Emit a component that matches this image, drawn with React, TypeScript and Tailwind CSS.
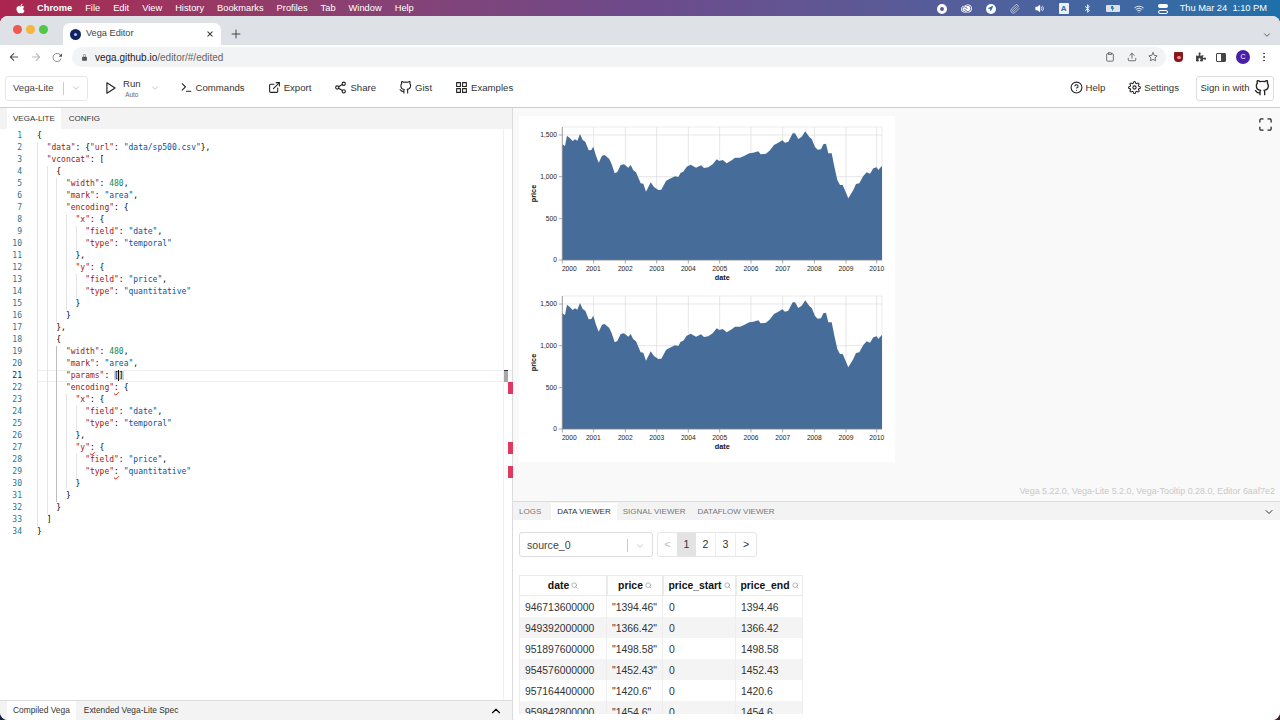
import { FaApple, FaBluetoothB, FaBolt, FaLocationArrow, FaPuzzlePiece } from "react-icons/fa";
import {
  FiChevronDown,
  FiChevronUp,
  FiExternalLink,
  FiGithub,
  FiGrid,
  FiHelpCircle,
  FiMaximize,
  FiMoreVertical,
  FiPaperclip,
  FiPlay,
  FiSearch,
  FiSettings,
  FiShare2,
  FiStar,
  FiTerminal,
  FiUpload,
  FiClipboard,
  FiWifi,
} from "react-icons/fi";
import { IoArrowBack, IoArrowForward, IoReload, IoLockClosed, IoClose, IoAdd, IoVolumeMedium } from "react-icons/io5";
import { SiAdobecreativecloud } from "react-icons/si";

const code = [
  "{",
  '  "data": {"url": "data/sp500.csv"},',
  '  "vconcat": [',
  "    {",
  '      "width": 480,',
  '      "mark": "area",',
  '      "encoding": {',
  '        "x": {',
  '          "field": "date",',
  '          "type": "temporal"',
  "        },",
  '        "y": {',
  '          "field": "price",',
  '          "type": "quantitative"',
  "        }",
  "      }",
  "    },",
  "    {",
  '      "width": 480,',
  '      "mark": "area",',
  '      "params": []',
  '      "encoding": {',
  '        "x": {',
  '          "field": "date",',
  '          "type": "temporal"',
  "        },",
  '        "y": {',
  '          "field": "price",',
  '          "type": "quantitative"',
  "        }",
  "      }",
  "    }",
  "  ]",
  "}",
];

const squiggled = [22, 27, 29];

const CodeText = ({ text, num }: { text: string; num: number }) => {
  const parts = text.split(/("[^"]*"(?=:)|"[^"]*"|\b\d+\b)/);
  return (
    <>
      {parts.map((p, i) => {
        if (p === "") return null;
        const isKey = p.startsWith('"') && parts[i + 1]?.startsWith(":");
        if (isKey) return <span key={i} className="text-[#a31515]">{p}</span>;
        if (p.startsWith('"')) return <span key={i} className="text-[#0451a5]">{p}</span>;
        if (/^\d+$/.test(p)) return <span key={i} className="text-[#098658]">{p}</span>;
        if (num === 21 && p.includes("[]")) {
          return (
            <span key={i}>
              {p.replace("[]", "")}
              <span className="relative bg-[#d4d4d4]">
                []
                <span className="absolute left-[4px] top-[-1px] h-[11px] w-[1px] bg-black"></span>
              </span>
            </span>
          );
        }
        if (squiggled.includes(num) && p.startsWith(":")) {
          return (
            <span key={i}>
              <span className="underline decoration-wavy decoration-[#e51400] decoration-[0.5px] underline-offset-[1px]">:</span>
              {p.slice(1)}
            </span>
          );
        }
        return <span key={i}>{p}</span>;
      })}
    </>
  );
};

const CodeLine = ({ text, num }: { text: string; num: number }) => {
  const spaces = text.length - text.trimStart().length;
  const levels = spaces / 2;
  const active = num === 21;
  return (
    <div className="flex h-[12px] items-center">
      <div className={`w-[22px] shrink-0 text-right ${active ? "text-[#0b216f]" : "text-[#237893]"}`}>{num}</div>
      <div className={`ml-[15px] flex h-[12px] flex-1 items-center whitespace-pre ${active ? "border-y border-[#eeeeee]" : ""}`}>
        {Array.from({ length: levels }).map((_, i) => (
          <span
            key={i}
            className={`inline-block h-[12px] w-[9.63px] shrink-0 border-l ${
              num >= 19 && num <= 31 && i === 2 ? "border-[#bdbdbd]" : "border-[#e4e4e4]"
            }`}
          ></span>
        ))}
        <span className="text-black">
          <CodeText text={text.trimStart()} num={num} />
        </span>
      </div>
    </div>
  );
};

// traced from the chart, in 3x px
const pts = [
  [127, 88], [135, 93], [141, 62], [150, 70], [158, 78], [165, 73], [172, 77], [180, 57], [188, 75], [196, 80],
  [206, 106], [214, 105], [220, 95], [228, 122], [236, 143], [246, 122], [254, 120], [268, 132], [275, 148], [284, 175],
  [292, 171], [302, 150], [312, 148], [325, 158], [332, 150], [340, 166], [348, 172], [362, 205], [370, 206], [378, 230],
  [392, 202], [402, 216], [415, 225], [424, 224], [438, 198], [448, 192], [465, 184], [475, 186], [482, 173], [490, 170],
  [500, 155], [512, 149], [528, 158], [543, 151], [552, 159], [565, 157], [578, 148], [590, 133], [598, 138], [608, 135],
  [620, 145], [635, 136], [645, 128], [660, 128], [672, 123], [688, 115], [700, 113], [715, 109], [722, 118], [738, 116],
  [750, 106], [762, 90], [775, 83], [787, 76], [795, 83], [805, 80], [818, 55], [825, 55], [835, 72], [845, 65],
  [856, 49], [868, 66], [875, 72], [885, 96], [893, 104], [903, 103], [910, 88], [918, 86], [925, 115], [935, 115],
  [942, 150], [952, 195], [960, 210], [968, 210], [985, 250], [1000, 225], [1008, 207], [1018, 205], [1030, 183], [1040, 172],
  [1050, 176], [1060, 160], [1070, 157], [1075, 165], [1086, 152],
];
const areaPath =
  "M42.33 145 " + pts.map(([x, y]) => `L${(x / 3).toFixed(1)} ${(y / 3).toFixed(1)}`).join(" ") + " L362 145 Z";

const ticksX = [
  [127, 148, "2000"], [221, 220, "2001"], [316, 316, "2002"], [410, 410, "2003"], [505, 505, "2004"], [599, 599, "2005"],
  [693, 693, "2006"], [788, 788, "2007"], [883, 883, "2008"], [978, 978, "2009"], [1070, 1070, "2010"],
] as const;
const ticksY = [
  [60, "1,500"], [185, "1,000"], [311, "500"], [435, "0"],
] as const;

const Chart = ({ height }: { height: number }) => (
  <svg viewBox={`-1 1 376 ${height}`} width={376} height={height} className="block" fontFamily="'Liberation Sans', sans-serif">
    <rect x="42.3" y="12" width="319.7" height="133" fill="#fff" stroke="#dddddd" strokeWidth="0.6" />
    {ticksX.map(([x]) => (
      <line key={x} x1={x / 3} x2={x / 3} y1="12" y2="145" stroke="#dddddd" strokeWidth="0.7" />
    ))}
    {ticksY.map(([y]) => (
      <line key={y} x1="42.3" x2="362" y1={y / 3} y2={y / 3} stroke="#dddddd" strokeWidth="0.7" />
    ))}
    <path d={areaPath} fill="#466d99" />
    {ticksX.map(([x, lx, label]) => (
      <g key={x}>
        <line x1={x / 3} x2={x / 3} y1="145" y2="148.5" stroke="#888" strokeWidth="0.7" />
        <text x={lx / 3} y="155.5" textAnchor="middle" fontSize="6.7" fill="#222">{label}</text>
      </g>
    ))}
    {ticksY.map(([y, label]) => (
      <g key={y}>
        <line x1="38.8" x2="42.3" y1={y / 3} y2={y / 3} stroke="#888" strokeWidth="0.7" />
        <text x="37" y={y / 3 + 2.4} textAnchor="end" fontSize="6.7" fill="#222">{label}</text>
      </g>
    ))}
    <line x1="42.3" x2="362" y1="145" y2="145" stroke="#888" strokeWidth="0.7" />
    <line x1="42.3" x2="42.3" y1="12" y2="145" stroke="#888" strokeWidth="0.7" />
    <text x="202.3" y="165" textAnchor="middle" fontSize="7.3" fontWeight="700" fill="#111">date</text>
    <text transform="translate(16 78.5) rotate(-90)" textAnchor="middle" fontSize="7.3" fontWeight="700" fill="#111">price</text>
  </svg>
);

const rows = [
  ["946713600000", '"1394.46"', "0", "1394.46"],
  ["949392000000", '"1366.42"', "0", "1366.42"],
  ["951897600000", '"1498.58"', "0", "1498.58"],
  ["954576000000", '"1452.43"', "0", "1452.43"],
  ["957164400000", '"1420.6"', "0", "1420.6"],
  ["959842800000", '"1454.6"', "0", "1454.6"],
];

const Th = ({ label, width }: { label: string; width: string }) => (
  <div className={`flex h-[21px] items-center justify-center gap-[2px] border border-[#eaeaea] font-bold text-[#111] ${width}`}>
    {label}
    <FiSearch className="h-[7px] w-[7px] text-[#888]" />
  </div>
);

const HeaderItem = ({ icon, label }: { icon: React.ReactNode; label: string }) => (
  <div className="flex items-center gap-[3px]">
    {icon}
    <span>{label}</span>
  </div>
);

export default function App() {
  const iconCls = "h-[13px] w-[13px] text-[#222]";
  return (
    <div className="relative h-[720px] w-[1280px] overflow-hidden bg-linear-to-r from-[#ab254f] via-[#6d4a8b] to-[#1c70aa] font-['Liberation_Sans',sans-serif]">
      {/* wallpaper showing at the window's lower corners */}
      <span className="absolute bottom-0 left-0 h-[8px] w-[8px] bg-[#14223f]"></span>
      <span className="absolute bottom-0 right-0 h-[8px] w-[8px] bg-[#4a1630]"></span>

      {/* mac menu bar */}
      <div className="flex h-[16px] items-center pl-[15px] pr-[13px] pt-px text-[9.3px] text-white">
        <FaApple className="mr-[11px] h-[11px] w-[11px]" />
        <span className="mr-[13px] font-bold">Chrome</span>
        <div className="flex gap-[13px]">
          <span>File</span>
          <span>Edit</span>
          <span>View</span>
          <span>History</span>
          <span>Bookmarks</span>
          <span>Profiles</span>
          <span>Tab</span>
          <span>Window</span>
          <span>Help</span>
        </div>
        <div className="ml-auto flex items-center gap-[14px]">
          <span className="h-[10px] w-[10px] rounded-full border-[3px] border-white"></span>
          <SiAdobecreativecloud className="h-[11px] w-[11px]" />
          <span className="flex h-[10px] w-[10px] items-center justify-center rounded-full bg-white">
            <FaLocationArrow className="h-[5px] w-[5px] text-[#2a6ea5]" />
          </span>
          <FiPaperclip className="h-[10px] w-[10px] text-white/70" />
          <IoVolumeMedium className="h-[11px] w-[11px]" />
          <span className="flex h-[11px] w-[10px] items-center justify-center rounded-[1px] bg-white/90 text-[8px] font-bold text-[#2a6ea5]">A</span>
          <FaBluetoothB className="h-[9px] w-[9px]" />
          <span className="flex h-[7px] w-[14px] items-center justify-center rounded-[1px] bg-white/80">
            <FaBolt className="h-[5px] w-[5px] text-[#2a6ea5]" />
          </span>
          <FiWifi className="h-[10px] w-[10px]" />
          <span className="flex h-[10px] w-[10px] flex-col justify-between">
            <span className="h-[4px] rounded-full bg-white"></span>
            <span className="h-[4px] rounded-full border border-white"></span>
          </span>
          <span className="-ml-[2px]">Thu Mar 24&nbsp;&nbsp;1:10 PM</span>
        </div>
      </div>

      {/* browser window */}
      <div className="relative flex h-[704px] flex-col overflow-hidden rounded-[8px] bg-white text-[#333]">
        <div className="flex h-[29px] items-end bg-[#dee1e6]">
          <div className="mb-[11px] ml-[13px] flex gap-[4px]">
            <span className="h-[9px] w-[9px] rounded-full bg-[#ee5a52]"></span>
            <span className="h-[9px] w-[9px] rounded-full bg-[#f4b73d]"></span>
            <span className="h-[9px] w-[9px] rounded-full bg-[#4fc748]"></span>
          </div>
          <div className="ml-[15px] flex h-[22px] w-[158px] items-center rounded-t-[7px] bg-white pl-[7px] pr-[6px] text-[9.2px] text-[#444]">
            <span className="mr-[5px] flex h-[11px] w-[11px] items-center justify-center rounded-full bg-[#14235e]">
              <span className="h-[3px] w-[3px] rounded-full bg-[#9fc2ff]"></span>
            </span>
            Vega Editor
            <IoClose className="ml-auto h-[10px] w-[10px] text-[#333]" />
          </div>
          <IoAdd className="mb-[4px] ml-[8px] h-[14px] w-[14px] text-[#333]" />
          <FiChevronDown className="mb-[5px] ml-auto mr-[8px] h-[10px] w-[10px] text-[#444]" />
        </div>

        <div className="flex h-[24px] items-center bg-white pl-[8px] pr-[10px]">
          <IoArrowBack className="h-[12px] w-[12px] text-[#555]" />
          <IoArrowForward className="ml-[10px] h-[12px] w-[12px] text-[#bbb]" />
          <IoReload className="ml-[10px] h-[11px] w-[11px] text-[#555]" />
          <div className="ml-[9px] flex h-[20px] w-[1095px] items-center rounded-full bg-[#f1f3f4] pl-[9px] pr-[8px] text-[10px]">
            <IoLockClosed className="mr-[7px] h-[7px] w-[7px] text-[#555]" />
            <span className="text-[#222]">vega.github.io</span>
            <span className="text-[#666]">/editor/#/edited</span>
            <FiClipboard className="ml-auto h-[10px] w-[10px] text-[#555]" />
            <FiUpload className="ml-[12px] h-[10px] w-[10px] text-[#555]" />
            <FiStar className="ml-[11px] h-[10px] w-[10px] text-[#555]" />
          </div>
          <span className="ml-[8px] flex h-[10px] w-[9px] items-center justify-center rounded-b-[4px] rounded-t-[1px] bg-[#8a1620]">
            <span className="h-[3px] w-[4px] rounded-sm bg-[#e88]"></span>
          </span>
          <FaPuzzlePiece className="ml-[13px] h-[10px] w-[10px] text-[#444]" />
          <span className="ml-[10px] h-[9px] w-[10px] rounded-[1px] border border-[#444] bg-linear-to-r from-white from-50% to-[#444] to-50%"></span>
          <span className="ml-[10px] flex h-[14px] w-[14px] items-center justify-center rounded-full bg-[#4a1fa8] text-[7px] text-white">C</span>
          <FiMoreVertical className="ml-[8px] h-[12px] w-[12px] text-[#444]" />
        </div>

        {/* app header */}
        <div className="flex h-[39px] items-center border-b border-[#cfcfcf] bg-white pl-[5px] pr-[6px] text-[9.6px] text-[#333]">
          <div className="flex h-[25px] w-[83px] items-center rounded-[3px] border border-[#e6e6e6] pl-[7px] text-[#444]">
            Vega-Lite
            <span className="ml-[9px] h-[13px] w-px bg-[#cccccc]"></span>
            <FiChevronDown className="ml-[7px] h-[10px] w-[10px] text-[#bbb]" />
          </div>
          <FiPlay className="ml-[16px] h-[14px] w-[14px] text-[#222]" />
          <div className="ml-[5px] flex flex-col items-center">
            <span className="leading-[12px]">Run</span>
            <span className="text-[6.4px] leading-[9px] text-[#666]">Auto</span>
          </div>
          <FiChevronDown className="ml-[9px] h-[10px] w-[10px] text-[#bbb]" />
          <div className="ml-[20px] flex items-center gap-[23px]">
            <HeaderItem icon={<FiTerminal className={iconCls} />} label="Commands" />
            <HeaderItem icon={<FiExternalLink className={iconCls} />} label="Export" />
            <HeaderItem icon={<FiShare2 className={iconCls} />} label="Share" />
            <HeaderItem icon={<FiGithub className={iconCls} />} label="Gist" />
            <HeaderItem icon={<FiGrid className={iconCls} />} label="Examples" />
          </div>
          <div className="ml-auto flex items-center">
            <HeaderItem icon={<FiHelpCircle className={iconCls} />} label="Help" />
            <div className="ml-[23px]">
              <HeaderItem icon={<FiSettings className={iconCls} />} label="Settings" />
            </div>
            <div className="ml-[17px] flex h-[25px] w-[78px] items-center justify-center gap-[4px] rounded-[3px] border border-[#dddddd]">
              Sign in with
              <FiGithub className="h-[16px] w-[16px] text-[#222]" />
            </div>
          </div>
        </div>

        {/* main split */}
        <div className="flex min-h-0 flex-1">
          <div className="flex w-[512px] shrink-0 flex-col">
            <div className="flex h-[21px] items-center bg-[#f3f3f3] pl-[7px] text-[8px] text-[#333]">
              <span className="flex h-[21px] items-center bg-white px-[6px] pt-px">VEGA-LITE</span>
              <span className="ml-[8px] pt-px">CONFIG</span>
            </div>
            <div className="relative min-h-0 flex-1 pt-px font-['DejaVu_Sans_Mono',monospace] text-[8px]">
              {code.map((line, i) => (
                <CodeLine key={i} text={line} num={i + 1} />
              ))}
              <div className="absolute bottom-0 left-[503px] top-0 w-[9px] border-l border-[#f0f0f0]">
                <span className="absolute left-0 top-[241px] h-[12px] w-[4px] border-t border-[#333] bg-[#a8a8a8]"></span>
                <span className="absolute left-[4px] top-[253px] h-[12px] w-[5px] bg-[#e0395f]"></span>
                <span className="absolute left-[4px] top-[313px] h-[12px] w-[5px] bg-[#e0395f]"></span>
                <span className="absolute left-[4px] top-[337px] h-[12px] w-[5px] bg-[#e0395f]"></span>
              </div>
            </div>
            <div className="flex h-[20px] items-center border-t border-[#dddddd] bg-[#f3f3f3] pl-[7px] pr-[9px] text-[8.4px] text-[#333]">
              <span className="flex h-[20px] items-center bg-white px-[6px]">Compiled Vega</span>
              <span className="ml-[8px]">Extended Vega-Lite Spec</span>
              <FiChevronUp className="ml-auto h-[14px] w-[14px] text-black" />
            </div>
          </div>

          <div className="flex min-w-0 flex-1 flex-col border-l border-[#dcdcdc]">
            <div className="relative flex h-[393px] flex-col bg-[#f9f9f9] pl-[6px] pr-[5px] pt-[8px]">
              <div className="h-[346px] w-[376px] overflow-hidden bg-white">
                <Chart height={169} />
                <Chart height={177} />
              </div>
              <FiMaximize className="absolute right-[7px] top-[9px] h-[15px] w-[15px] text-[#222]" />
              <div className="mt-auto pb-[3px] text-right text-[8.9px] text-[#c9c9c9]">
                Vega 5.22.0, Vega-Lite 5.2.0, Vega-Tooltip 0.28.0, Editor 6aaf7e2
              </div>
            </div>

            <div className="flex h-[19px] items-center border-t border-[#dddddd] bg-[#f3f3f3] pl-[6px] pr-[5px] pt-px text-[8px] text-[#777]">
              <span>LOGS</span>
              <span className="ml-[10px] flex h-[18px] items-center bg-white px-[6px] text-[#333]">DATA VIEWER</span>
              <span className="ml-[6px]">SIGNAL VIEWER</span>
              <span className="ml-[12px]">DATAFLOW VIEWER</span>
              <FiChevronDown className="ml-auto h-[12px] w-[12px] text-[#333]" />
            </div>

            <div className="flex min-h-0 flex-1 flex-col bg-white pl-[6px]">
              <div className="mt-[12px] flex h-[25px] gap-[4px] text-[10.6px]">
                <div className="flex w-[134px] items-center rounded-[3px] border border-[#dddddd] pl-[7px] pt-[2px] text-[#444]">
                  source_0
                  <span className="ml-auto h-[13px] w-px bg-[#cccccc]"></span>
                  <FiChevronDown className="mx-[7px] h-[10px] w-[10px] text-[#bbb]" />
                </div>
                <div className="flex items-stretch overflow-hidden rounded-[3px] border border-[#e6e6e6] text-[#333]">
                  <span className="flex w-[19px] items-center justify-center text-[#bbb]">&lt;</span>
                  <span className="flex w-[19px] items-center justify-center bg-[#e3e3e3]">1</span>
                  <span className="flex w-[20px] items-center justify-center border-r border-[#eeeeee]">2</span>
                  <span className="flex w-[20px] items-center justify-center border-r border-[#eeeeee]">3</span>
                  <span className="flex w-[20px] items-center justify-center">&gt;</span>
                </div>
              </div>
              <div className="mt-[18px] h-[139px] w-[284px] overflow-hidden text-[10.4px] text-[#333]">
                <div className="flex">
                  <Th label="date" width="w-[88px]" />
                  <Th label="price" width="w-[56px]" />
                  <Th label="price_start" width="w-[73px]" />
                  <Th label="price_end" width="w-[67px]" />
                </div>
                {rows.map((r, i) => (
                  <div key={r[0]} className={`flex h-[21px] items-center ${i % 2 === 1 ? "bg-[#f4f4f4]" : "bg-white"}`}>
                    <span className="w-[88px] border-x border-[#eeeeee] pl-[5px] pt-[2px] leading-[19px]">{r[0]}</span>
                    <span className="w-[56px] border-r border-[#eeeeee] pl-[5px] pt-[2px] leading-[19px]">{r[1]}</span>
                    <span className="w-[73px] border-r border-[#eeeeee] pl-[6px] pt-[2px] leading-[19px]">{r[2]}</span>
                    <span className="w-[67px] border-r border-[#eeeeee] pl-[5px] pt-[2px] leading-[19px]">{r[3]}</span>
                  </div>
                ))}
              </div>
            </div>
          </div>
        </div>
      </div>
    </div>
  );
}
